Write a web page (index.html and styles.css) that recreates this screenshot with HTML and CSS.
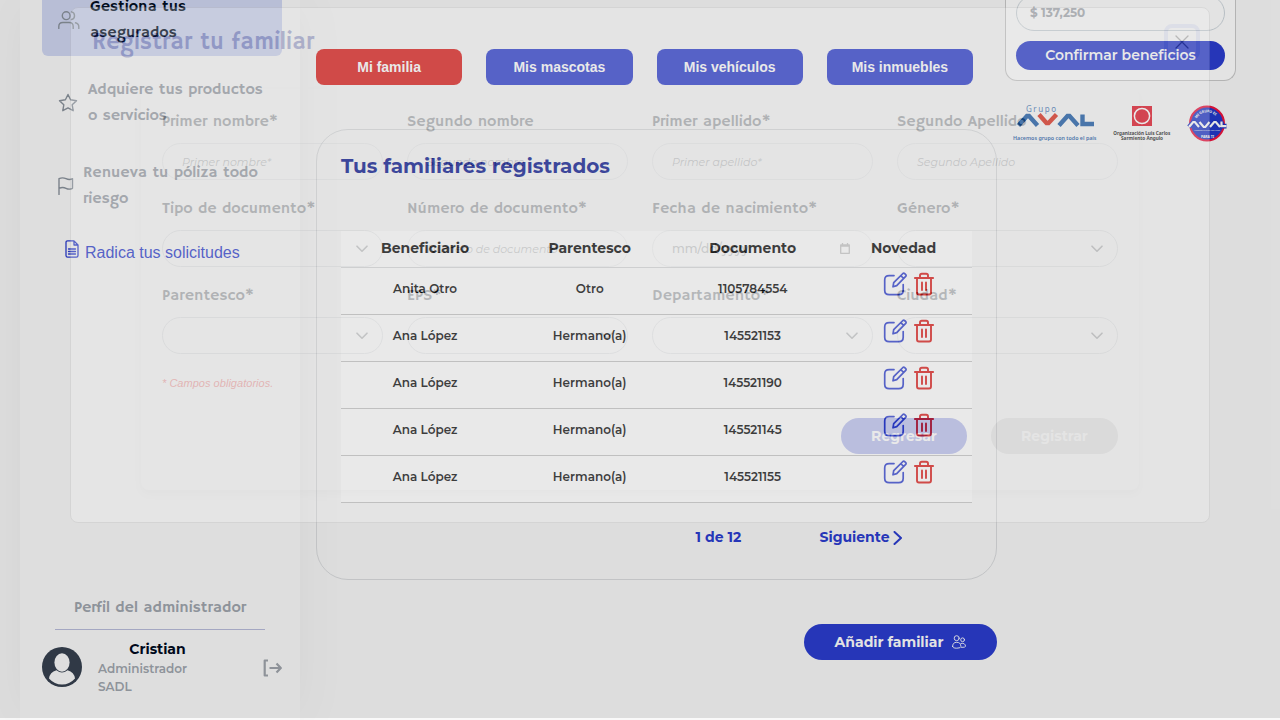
FILE: index.html
```html
<!DOCTYPE html>
<html lang="es">
<head>
<meta charset="utf-8">
<title>Registrar tu familiar</title>
<link rel="stylesheet" href="styles.css">
</head>
<body>
<svg class="defs" width="0" height="0" aria-hidden="true">
  <symbol id="edit" viewBox="0 0 24 24"><path d="M11 3.600H6.200Q1.700 3.600 1.700 8v10.200Q1.700 22.600 6.200 22.600h9.600Q20.200 22.600 20.200 18.200V12.500M10 14.800l.7-4.100 9.200-9.200q.9-.7 1.800.1l1 1q.8.9 0 1.800l-9 9.200zM17.800 3.600l2.900 2.900"/></symbol>
  <symbol id="trash" viewBox="0 0 20 24"><path d="M.8 6h18.400M3 6v14.600q0 1.900 1.900 1.900h10.200q1.900 0 1.900-1.900V6M6 6V3.500q0-1.800 1.800-1.800h4.400Q14 1.700 14 3.500V6M8 10.500v7.500M12 10.500v7.500"/></symbol>
  <symbol id="chev" viewBox="0 0 12 8"><path d="M1 1.200l5 5 5-5"/></symbol>
</svg>
<div class="page">
  <aside class="sidebar">
    <div class="nav-item active">
      <svg class="ico people" viewBox="0 0 22 18"><circle cx="8.200" cy="4.700" r="3.900"/><path d="M.8 17.500v-2q0-4 4-4h6.400q4 0 4 4v2M13.500.9a3.900 3.900 0 0 1 0 7.600M17.500 11.800q3.300.8 3.300 4v1.700"/></svg>
      <span>Gestiona tus<br>asegurados</span>
    </div>
    <div class="nav-item star">
      <svg class="ico" width="20" height="20" viewBox="0 0 20 20"><path d="M10 1.500l2.600 5.300 5.900.9-4.300 4.100 1 5.900L10 14.900l-5.200 2.800 1-5.900L1.500 7.700l5.900-.9z"/></svg>
      <span>Adquiere tus productos<br>o servicios</span>
    </div>
    <div class="nav-item flag">
      <svg class="ico" width="16" height="18" viewBox="0 0 16 18"><path d="M1 17.500V1.700q3.500-1.600 7 0t6.500 0v9.600q-3.200 1.600-6.500 0t-7 0"/></svg>
      <span>Renueva tu póliza todo<br>riesgo</span>
    </div>
    <a class="request"><svg width="14" height="18" viewBox="0 0 14 18"><path d="M9 .9H2.600Q1 .9 1 2.500v13q0 1.600 1.600 1.600h8.800q1.600 0 1.600-1.600V5zM9 .9V5h4M3.500 9h7M3.500 11.500h7M3.500 14h7"/></svg>Radica tus solicitudes</a>
    <div class="profile">
      <div class="profile-head">Perfil del administrador</div>
      <div class="user">
        <svg class="avatar" viewBox="0 0 40 40"><circle cx="20" cy="20" r="20" fill="#36404f"/><ellipse cx="20" cy="15.500" rx="7.600" ry="9.300" fill="#fafafa"/><path d="M7 31.500q.7-6.300 7.500-8.300 5.500 4.700 11 0 6.800 2 7.500 8.300Q27.500 37.500 20 37.500T7 31.500z" fill="#fafafa"/></svg>
        <div class="who"><b>Cristian</b><span>Administrador</span><span>SADL</span></div>
        <svg class="logout" viewBox="0 0 19 18"><path d="M5 1.500H1.700v15H5M6.500 9h11M13.500 4.500L17.800 9l-4.300 4.500"/></svg>
      </div>
    </div>
  </aside>
  <main class="main">
    <div class="tabs"><div class="tab current">Mi familia</div><div class="tab">Mis mascotas</div><div class="tab">Mis vehículos</div><div class="tab">Mis inmuebles</div></div>
    <section class="card">
      <h2>Tus familiares registrados</h2>
      <div class="table">
        <div class="row head"><span>Beneficiario</span><span>Parentesco</span><span>Documento</span><span>Novedad</span></div>
        <div class="row"><span>Anita Otro</span><span>Otro</span><span>1105784554</span><span class="acts"><svg class="edit"><use href="#edit"/></svg><svg class="trash"><use href="#trash"/></svg></span></div>
        <div class="row"><span>Ana López</span><span>Hermano(a)</span><span>145521153</span><span class="acts"><svg class="edit"><use href="#edit"/></svg><svg class="trash"><use href="#trash"/></svg></span></div>
        <div class="row"><span>Ana López</span><span>Hermano(a)</span><span>145521190</span><span class="acts"><svg class="edit"><use href="#edit"/></svg><svg class="trash"><use href="#trash"/></svg></span></div>
        <div class="row"><span>Ana López</span><span>Hermano(a)</span><span>145521145</span><span class="acts"><svg class="edit"><use href="#edit"/></svg><svg class="trash"><use href="#trash"/></svg></span></div>
        <div class="row"><span>Ana López</span><span>Hermano(a)</span><span>145521155</span><span class="acts"><svg class="edit"><use href="#edit"/></svg><svg class="trash"><use href="#trash"/></svg></span></div>
      </div>
      <div class="pager"><span class="count">1 de 12</span><span class="next">Siguiente</span><svg width="10" height="14" viewBox="0 0 10 14"><path d="M1.500 1l6.500 6-6.500 6"/></svg></div>
    </section>
    <div class="add">Añadir familiar<svg width="14" height="14" viewBox="0 0 14 14"><circle cx="4.700" cy="3.200" r="2.500"/><circle cx="10.600" cy="4.800" r="1.900"/><path d="M.6 11.500q0-4.200 4.100-4.200t4.200 4.200q0 1.700-4.200 1.700T.6 11.500zM9 8.400q4.500-.7 4.500 3 0 1-4 1"/></svg></div>
  </main>
  <aside class="right">
    <div class="benefits"><div class="amount">$ 137,250</div><div class="confirm">Confirmar beneficios</div></div>
    <div class="logos">
      <svg width="84" height="38" viewBox="0 0 84 38">
        <text x="13" y="6.500" class="l-grupo" textLength="30">Grupo</text>
        <g fill="none" stroke-width="4.400"><path stroke="#1858a5" d="M5.500 20.500L14 11h2l8.500 9.500"/><path stroke="#dc2c1c" d="M26 9.500l7.500 8.500h2L43.500 9.500"/><path stroke="#1858a5" d="M46 20.500l8.500-9.500h2l8.500 9.500M69.500 9.500v9.500h11.500"/></g>
        <text x="0" y="34.500" class="l-slogan" textLength="83.500" lengthAdjust="spacingAndGlyphs">Hacemos grupo con todo el país</text>
      </svg>
      <svg width="58" height="38" viewBox="0 0 58 38">
        <path fill="#e01224" d="M19 1h20v20H19z"/><circle cx="29" cy="11" r="7.600" fill="none" stroke="#fff" stroke-width="1.500"/>
        <text x="0.300" y="29.500" class="l-org" textLength="57" lengthAdjust="spacingAndGlyphs">Organización Luis Carlos</text><text x="8" y="35" class="l-org" textLength="42" lengthAdjust="spacingAndGlyphs">Sarmiento Angulo</text>
      </svg>
      <svg width="40" height="38" viewBox="0 0 40 38">
        <circle cx="20" cy="18.500" r="17" fill="#2339c9" stroke="#ed143d" stroke-width="2"/>
        <path id="arc" d="M9.500 13.500a12 12 0 0 1 21 0" fill="none"/><text class="l-badge"><textPath href="#arc" textLength="22">MI GRUPO ES</textPath></text>
        <path d="M2 22l4.200-5h1.600L12 22M12.500 17l4.200 5h1.600L22.500 17M23 22l4.200-5h1.600L33 22M34.500 16.500v4.600h5" stroke="#1f35c4" stroke-width="4.600"/>
        <path d="M2 22l4.200-5h1.600L12 22M12.500 17l4.200 5h1.600L22.500 17M23 22l4.200-5h1.600L33 22M34.500 16.500v4.600h5" stroke="#fff" stroke-width="2.200"/>
        <text x="7" y="26" class="l-tiny" textLength="26">Hacemos grupo con todo</text><text x="14" y="33" class="l-badge" textLength="13">PARA TI</text>
      </svg>
    </div>
  </aside>
</div>
<div class="backdrop"></div>
<div class="modal">
  <div class="modal-head"><h1>Registrar tu familiar</h1><div class="close"><svg width="14" height="14" viewBox="0 0 14 14"><path d="M1 1l12 12M13 1L1 13"/></svg></div></div>
  <div class="form">
    <div class="fields">
      <div class="field"><label>Primer nombre*</label><div class="input"><i>Primer nombre*</i></div></div>
      <div class="field"><label>Segundo nombre</label><div class="input"><i>Segundo nombre</i></div></div>
      <div class="field"><label>Primer apellido*</label><div class="input"><i>Primer apellido*</i></div></div>
      <div class="field"><label>Segundo Apellido</label><div class="input"><i>Segundo Apellido</i></div></div>
      <div class="field"><label>Tipo de documento*</label><div class="input select"><svg><use href="#chev"/></svg></div></div>
      <div class="field"><label>Número de documento*</label><div class="input"><i>Número de documento*</i></div></div>
      <div class="field"><label>Fecha de nacimiento*</label><div class="input date"><span>mm/dd/yyyy</span><svg class="cal" width="10" height="11" viewBox="0 0 10 11"><path d="M.7 2h8.600v8.300H.7zM.7 3h8.600M2.500 0v2M7.500 0v2"/></svg></div></div>
      <div class="field"><label>Género*</label><div class="input select"><svg><use href="#chev"/></svg></div></div>
      <div class="field"><label>Parentesco*</label><div class="input select"><svg><use href="#chev"/></svg></div></div>
      <div class="field"><label>EPS*</label><div class="input select"><svg><use href="#chev"/></svg></div></div>
      <div class="field"><label>Departamento*</label><div class="input select"><svg><use href="#chev"/></svg></div></div>
      <div class="field"><label>Ciudad*</label><div class="input select"><svg><use href="#chev"/></svg></div></div>
    </div>
    <div class="required">* Campos obligatorios.</div>
    <div class="buttons"><div class="btn back">Regresar</div><div class="btn">Registrar</div></div>
  </div>
</div>
</body>
</html>
```
FILE: styles.css
```css
* { box-sizing: border-box; }
html, body { margin: 0; width: 1280px; height: 720px; overflow: hidden; }
body { background: #f9f9f9; font-family: Montserrat, Inter, "Open Sans", sans-serif; position: relative; }
svg { fill: none; stroke-linecap: round; stroke-linejoin: round; flex: none; }
.defs { position: absolute; }

.page { display: grid; grid-template-columns: 280px 697px 255px; padding-left: 20px; height: 720px; }
.main { margin-left: 16px; width: 681px; padding-top: 49px; }
.right { margin-left: 8px; width: 231px; }

.sidebar { width: 280px; height: 720px; background: #fafafa; box-shadow: 0 0 50px rgba(0,0,0,.05); padding: 0 18px 0 22px; font-family: "Hammersmith One", Lato, sans-serif; display: flex; flex-direction: column; }
.nav-item { display: flex; align-items: center; font-size: 16px; line-height: 26px; color: #9ba1a9; white-space: nowrap; }
.nav-item.active { height: 66px; margin-top: -10px; padding: 0 0 0 16px; background: #cfd6f1; border-radius: 6px; color: #000d22; }
.active span { margin-left: 10px; padding-bottom: 6px; }
.ico { stroke: #8a929c; stroke-width: 1.400; }
.people { width: 22px; height: 18px; margin-top: -7px; }
.star { margin-top: 21px; padding-left: 16px; }
.star span { margin-left: 10px; }
.flag { margin-top: 31px; padding-left: 16px; }
.flag span { margin-left: 9px; }
.request { display: flex; align-items: center; gap: 6px; margin: 29px 0 0 23px; height: 24px; font: 16px "Liberation Sans", sans-serif; color: #2b3dcf; }
.request svg { stroke: #2b3dcf; stroke-width: 1.300; margin-top: -8px; }
.profile { margin-top: auto; height: 125px; }
.profile-head { margin: 0 17px 0 13px; height: 35px; border-bottom: 1px solid #b9bcda; text-align: center; font-size: 16px; line-height: 26px; color: #a0a6ae; }
.user { display: flex; margin-top: 8px; font-family: Montserrat, Inter, sans-serif; }
.avatar { width: 40px; height: 40px; margin-top: 9px; }
.who { margin-left: 16px; width: 119px; display: flex; flex-direction: column; font-size: 12px; line-height: 18px; font-weight: 600; color: #a0a6ae; }
.who b { text-align: center; font-size: 14px; line-height: 22px; font-weight: 700; color: #000a1e; }
.logout { width: 19px; height: 18px; margin: 21px 0 0 46px; stroke: #a0a5ac; stroke-width: 2.200; stroke-linecap: butt; }

.tabs { display: flex; gap: 24px; width: 657px; }
.tab { flex: 1; height: 36px; border-radius: 8px; background: #2b3dcf; color: #fff; font: bold 14px/36px "Liberation Sans", sans-serif; text-align: center; }
.current { background: #dc1a17; }
.card { margin-top: 44px; height: 451px; border: 1px solid #dadcde; border-radius: 32px; padding: 0 24px; }
h2 { margin: 19px 0 0; height: 32px; font-size: 20px; line-height: 34px; font-weight: 700; color: #06158f; white-space: nowrap; }
.table { margin-top: 50px; background: #fff; }
.row { display: grid; grid-template-columns: 168.200px 161px 165px 136.800px; height: 47px; border-bottom: 1px solid #c4c4c4; font-size: 12px; font-weight: 600; color: #060606; text-align: center; line-height: 42px; }
.head { height: 37px; font-size: 14px; font-weight: 700; line-height: 34px; border-color: #d8dadc; }
.acts { display: flex; gap: 7px; padding: 4px 0 0 47.800px; }
.edit { width: 24px; height: 24px; stroke: #2b3dcf; stroke-width: 1.700; }
.trash { width: 20px; height: 24px; stroke: #dc1a17; stroke-width: 1.900; }
.pager { display: flex; align-items: center; margin-top: 20px; height: 28px; padding-left: 354.500px; color: #2b3dcf; font-size: 14px; font-weight: 700; white-space: nowrap; }
.count { width: 124px; }
.next { width: 73px; }
.pager svg { stroke: #2b3dcf; stroke-width: 2; margin: 2px 0 0 .5px; }
.add { margin: 44px 0 0 auto; width: 193px; height: 36px; border-radius: 18px; background: #2b3dcf; color: #fff; display: flex; align-items: center; justify-content: center; gap: 9px; font-weight: 700; font-size: 14px; }
.add svg { stroke: #fff; stroke-width: .9; }

.benefits { display: flow-root; height: 81px; border: 1px solid #c9c9c9; border-top: 0; border-radius: 0 0 12px 12px; padding: 0 10px; background: #fff; }
.amount { height: 36px; margin-top: -5px; border: 1px solid #cfd7dd; border-radius: 18px; padding-left: 13px; line-height: 34px; font-size: 12px; font-weight: 700; color: #a8acb2; }
.confirm { margin-top: 10px; height: 29px; border-radius: 15px; background: #2b3dcf; color: #fff; text-align: center; font-size: 14px; font-weight: 600; line-height: 28px; }
.logos { display: flex; margin: 24px 0 0 8px; gap: 16px; }
.logos svg { overflow: visible; stroke-linecap: butt; stroke-linejoin: miter; }
.logos text { stroke: none; font-family: "Noto Sans", sans-serif; }
.l-grupo { font-size: 8px; fill: #4777b5; }
.l-slogan { font-size: 6px; font-weight: 600; fill: #1858a5; }
.l-org { font-size: 5px; font-weight: 700; fill: #222; }
.l-badge { font-size: 3.500px; font-weight: 700; fill: #fff; }
.l-tiny { font-size: 2px; fill: #fff; }

.backdrop { position: absolute; left: 0; top: 0; width: 1280px; height: 718px; background: rgba(0,0,0,.11); }
.modal { position: absolute; left: 70px; top: 7px; width: 1140px; height: 516px; background: #fff; border: 1px solid #b5b5b5; border-radius: 8px; opacity: .22; }
.modal-head { display: flex; justify-content: space-between; padding: 16px 9px 0 21px; height: 81px; }
h1 { margin: 0; font: 400 24px/36px "Hammersmith One", Lato, sans-serif; color: #0a168c; white-space: nowrap; }
.close { width: 36px; height: 36px; border: 4px solid #c7cff5; border-radius: 8px; display: flex; align-items: center; justify-content: center; }
.close svg { stroke: #222; stroke-width: 1.300; }
.form { margin: 0 70px; height: 401px; padding: 12px 21px 0; border-radius: 8px; box-shadow: 0 4px 8px rgba(0,0,0,.08); }
.fields { display: grid; grid-template-columns: repeat(4, 221px); column-gap: 24px; }
.field { height: 87px; }
.field label { display: block; height: 42px; padding-top: 8px; font: 16px/26px "Hammersmith One", Lato, sans-serif; color: #101a28; white-space: nowrap; }
.input { height: 37px; border: 1px solid #dadde0; border-radius: 19px; padding: 0 19px; display: flex; align-items: center; font-size: 11px; color: #6c7074; }
.select { border-color: #ccd0d4; justify-content: flex-end; padding-right: 14px; }
.select svg { width: 12px; height: 8px; stroke: #54585c; stroke-width: 1.600; }
.date { justify-content: space-between; padding-right: 22px; font-size: 12.100px; font-weight: 500; }
.cal { stroke: #555; stroke-width: 1.300; }
.required { height: 20px; margin-top: 15px; font: italic 11px/12px "Liberation Sans", sans-serif; color: #f01818; letter-spacing: .03px; }
.buttons { display: flex; justify-content: flex-end; gap: 24px; margin-top: 21px; }
.btn { width: 127px; height: 36px; border-radius: 18px; background: #d0d0d0; color: #fff; font-size: 14px; font-weight: 700; text-align: center; line-height: 36px; }
.back { width: 126px; background: #2b3dcf; }
```
